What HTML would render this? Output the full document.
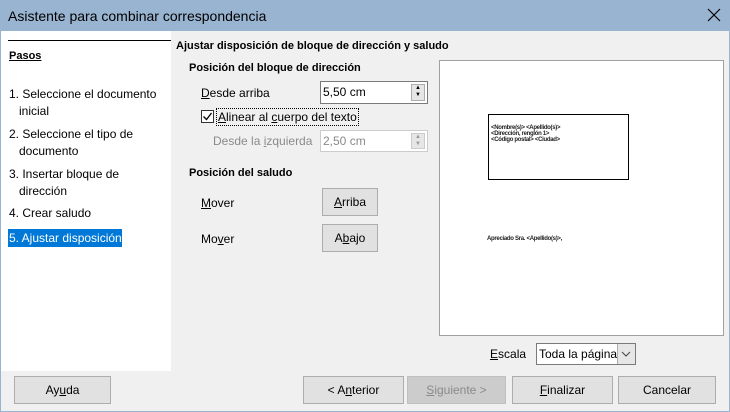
<!DOCTYPE html>
<html><head><meta charset="utf-8"><style>
*{margin:0;padding:0;box-sizing:border-box}
body{width:730px;height:412px;overflow:hidden;background:#f0f0f0;font-family:"Liberation Sans",sans-serif;font-size:12px;color:#000;position:relative}
.a{position:absolute;white-space:nowrap}
.b{font-weight:bold;font-size:11px}
.btn{position:absolute;background:#e1e1e1;border:1px solid #adadad;text-align:center;font-size:12px}
.spin{position:absolute;background:#fff;border:1px solid #7a7a7a;font-size:12px;padding:3px 0 0 2px}
.arr{position:absolute;right:2px;width:14px;border:1px solid #adadad;background:#e6e6e6;font-size:6px;line-height:7px;text-align:center}
u{text-decoration:underline}
.pv{font-size:6px;font-family:'Liberation Sans',sans-serif;letter-spacing:-0.3px;font-weight:bold;color:#222}
</style></head><body>
<div class="a" style="left:0;top:0;width:730px;height:31px;background:#99b4d1"></div>
<div class="a" style="left:8px;top:8px;font-size:14px;color:#000">Asistente para combinar correspondencia</div>
<svg class="a" style="left:707px;top:8px" width="14" height="14"><path d="M1 1L13 13M13 1L1 13" stroke="#000" stroke-width="1.2"/></svg>
<div class="a" style="left:0;top:31px;width:1px;height:381px;background:#99b4d1"></div>
<div class="a" style="right:0;top:31px;width:1px;height:381px;background:#99b4d1"></div>
<div class="a" style="left:0;top:411px;width:730px;height:1px;background:#99b4d1"></div>

<div class="a" style="left:1px;top:31px;width:170px;height:340px;background:#fff"></div>
<div class="a" style="left:8px;top:40px;width:163px;height:1px;background:#000"></div>
<div class="a b" style="left:9px;top:50px"><u>Pasos</u></div>
<div class="a" style="left:9px;top:86px;line-height:17px">1. Seleccione el documento<br>&nbsp;&nbsp;&nbsp;inicial</div>
<div class="a" style="left:9px;top:126px;line-height:17px">2. Seleccione el tipo de<br>&nbsp;&nbsp;&nbsp;documento</div>
<div class="a" style="left:9px;top:166px;line-height:17px">3. Insertar bloque de<br>&nbsp;&nbsp;&nbsp;dirección</div>
<div class="a" style="left:9px;top:206px">4. Crear saludo</div>
<div class="a" style="left:8px;top:229px;width:114px;height:18px;background:#0078d7"></div>
<div class="a" style="left:9px;top:231px;color:#fff">5. Ajustar disposición</div>

<div class="a b" style="left:176px;top:40px">Ajustar disposición de bloque de dirección y saludo</div>
<div class="a b" style="left:189px;top:62px">Posición del bloque de dirección</div>
<div class="a" style="left:201px;top:86px"><u>D</u>esde arriba</div>
<div class="spin" style="left:320px;top:81px;width:108px;height:23px">5,50 cm<div class="arr" style="top:2px;height:17px">▲<br>▼</div></div>
<div class="a" style="left:201px;top:110px;width:13px;height:13px;border:1px solid #333;background:#fff"></div>
<svg class="a" style="left:202px;top:111px" width="11" height="11"><path d="M1.5 5.5L4.5 8.5L9.5 2" stroke="#000" stroke-width="1.3" fill="none"/></svg>
<div class="a" style="left:216px;top:108px;width:143px;height:18px;border:1px dotted #000"></div>
<div class="a" style="left:218px;top:110px"><u>A</u>linear al <u>c</u>uerpo del texto</div>
<div class="a" style="left:213px;top:134px;color:#8a8a8a">Desde la <u>i</u>zquierda</div>
<div class="spin" style="left:320px;top:130px;width:108px;height:22px;border-color:#ccc;color:#8a8a8a">2,50 cm<div class="arr" style="top:2px;height:16px;border-color:#ccc;color:#999">▲<br>▼</div></div>
<div class="a b" style="left:189px;top:167px">Posición del saludo</div>
<div class="a" style="left:201px;top:196px"><u>M</u>over</div>
<div class="btn" style="left:322px;top:188px;width:56px;height:28px;line-height:26px"><u>A</u>rriba</div>
<div class="a" style="left:201px;top:232px">Mo<u>v</u>er</div>
<div class="btn" style="left:322px;top:224px;width:56px;height:28px;line-height:26px">A<u>b</u>ajo</div>

<div class="a" style="left:439px;top:60px;width:285px;height:276px;background:#fff;border:1px solid #a0a0a0"></div>
<div class="a" style="left:488px;top:114px;width:141px;height:66px;border:1px solid #000"></div>
<div class="a pv" style="left:491px;top:125px;line-height:6px">&lt;Nombre(s)&gt; &lt;Apellido(s)&gt;<br>&lt;Dirección, renglón 1&gt;<br>&lt;Código postal&gt; &lt;Ciudad&gt;</div>
<div class="a pv" style="left:487px;top:236px">Apreciado Sra. &lt;Apellido(s)&gt;,</div>

<div class="a" style="left:490px;top:347px"><u>E</u>scala</div>
<div class="a" style="left:536px;top:343px;width:100px;height:22px;background:#fff;border:1px solid #7a7a7a"></div>
<div class="a" style="left:539px;top:347px">Toda la página</div>
<div class="a" style="left:617px;top:344px;width:18px;height:20px;background:#e6e6e6;border-left:1px solid #adadad"></div>
<svg class="a" style="left:621px;top:350px" width="10" height="8"><path d="M1 2L5 6L9 2" stroke="#444" fill="none"/></svg>

<div class="btn" style="left:14px;top:376px;width:97px;height:28px;line-height:26px">Ay<u>u</u>da</div>
<div class="btn" style="left:303px;top:376px;width:101px;height:28px;line-height:26px">&lt; A<u>n</u>terior</div>
<div class="btn" style="left:407px;top:376px;width:99px;height:28px;line-height:26px;background:#ccc;border-color:#bfbfbf;color:#8a8a8a"><u>S</u>iguiente &gt;</div>
<div class="btn" style="left:512px;top:376px;width:101px;height:28px;line-height:26px"><u>F</u>inalizar</div>
<div class="btn" style="left:618px;top:376px;width:98px;height:28px;line-height:26px">Cancelar</div>
</body></html>
